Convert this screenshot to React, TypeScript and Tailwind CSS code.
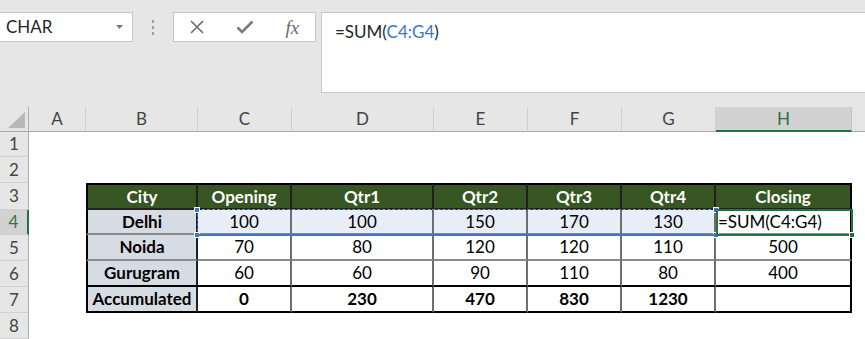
import React from "react"

const colHeads = [
  { label: "A", w: "w-[57px]" },
  { label: "B", w: "w-[112px]" },
  { label: "C", w: "w-[94px]" },
  { label: "D", w: "w-[142px]" },
  { label: "E", w: "w-[94px]" },
  { label: "F", w: "w-[94px]" },
  { label: "G", w: "w-[94px]" },
  { label: "H", w: "w-[136px]" },
]

// table columns B..H
const tableW = ["w-[112px]", "w-[94px]", "w-[142px]", "w-[94px]", "w-[94px]", "w-[94px]", "w-[136px]"]

const rowH = ["h-[25px]", "h-[26px]", "h-[27px]", "h-[25px]", "h-[26px]", "h-[26px]", "h-[26px]", "h-[26px]"]

const data: Record<number, string[]> = {
  3: ["City", "Opening", "Qtr1", "Qtr2", "Qtr3", "Qtr4", "Closing"],
  4: ["Delhi", "100", "100", "150", "170", "130", "=SUM(C4:G4)"],
  5: ["Noida", "70", "80", "120", "120", "110", "500"],
  6: ["Gurugram", "60", "60", "90", "110", "80", "400"],
  7: ["Accumulated", "0", "230", "470", "830", "1230", ""],
}

function cellCls(r: number, c: number) {
  const cls = ["shrink-0 flex items-center border-r-2 border-b-2", tableW[c]]
  if (r === 4 && c === 6) cls.push("justify-start pl-[2px]")
  else cls.push("justify-center")
  if (r === 3) cls.push("border-t-2 border-t-black")
  if (c === 0) cls.push("border-l-2 border-l-black")

  if (c === 6) cls.push("border-r-black")
  else if (c === 0 || r === 3) cls.push("border-r-[#222]")
  else cls.push("border-r-[#6e6e6e]")

  if (r === 6 || r === 7) cls.push("border-b-black")
  else if (r === 3) cls.push("border-b-[#222]")
  else cls.push("border-b-[#8a8a8a]")

  if (r === 3) cls.push("bg-[#375623] text-white font-bold")
  else if (c === 0) cls.push("bg-[#d6dce4] font-bold text-black")
  else if (r === 4 && c < 6) cls.push("bg-[#e8eef8] text-black")
  else cls.push("bg-white text-black")
  if (r === 7) cls.push("font-bold")
  return cls.join(" ")
}

function Handle({ className }: { className: string }) {
  return <div className={"absolute w-[6px] h-[6px] bg-[#4472c4] border border-white " + className} />
}

export default function App() {
  return (
    <div className="w-[865px] h-[339px] overflow-hidden bg-white font-[Lato,sans-serif] text-[17px]">
      {/* Name box + formula bar */}
      <div className="h-[107px] bg-[#e6e6e6] flex items-start pt-[12px]">
        <div className="w-[133px] h-[30px] shrink-0 bg-white border border-[#c6c6c6] border-l-0 flex items-center justify-between pl-[6px] pr-[9px]">
          <span className="text-[17px] text-[#262626]">CHAR</span>
          <svg width="7" height="4" viewBox="0 0 7 4">
            <path d="M0 0h7L3.5 4z" fill="#7a7a7a" />
          </svg>
        </div>
        <div className="w-[40px] h-[30px] shrink-0 flex flex-col items-center justify-center gap-[3px]">
          <span className="w-[2px] h-[3px] bg-[#a0a0a0]" />
          <span className="w-[2px] h-[3px] bg-[#a0a0a0]" />
          <span className="w-[2px] h-[3px] bg-[#a0a0a0]" />
        </div>
        <div className="w-[143px] h-[30px] shrink-0 bg-white border border-[#c6c6c6] flex items-center justify-around">
          <svg width="14" height="14" viewBox="0 0 14 14">
            <path d="M1 1l12 12M13 1L1 13" stroke="#6a6a6a" strokeWidth="1.6" fill="none" />
          </svg>
          <svg width="18" height="14" viewBox="0 0 18 14">
            <path d="M1.5 7.5l4.5 4.5L16.5 1.5" stroke="#7a7a7a" strokeWidth="2.6" fill="none" />
          </svg>
          <span className="font-['Liberation_Serif',serif] italic text-[19px] text-[#6a6a6a] leading-none">fx</span>
        </div>
        <div className="ml-[5px] flex-1 h-[81px] bg-white border border-[#c6c6c6] border-r-0 pl-[13px] pt-[6px] text-[17px] text-[#262626]">
          =SUM(<span className="text-[#3a78c4]">C4:G4</span>)
        </div>
      </div>

      {/* Sheet */}
      <div className="relative">
        <div className="flex h-[25px]">
          <div className="w-[29px] shrink-0 bg-[#e6e6e6] border-r border-r-[#ababab] border-b border-b-[#ababab] flex items-end justify-end pr-[3px] pb-[3px]">
            <svg width="17" height="16" viewBox="0 0 17 16">
              <path d="M17 0V16H0z" fill="#b8b8b8" />
            </svg>
          </div>
          {colHeads.map((h) =>
            h.label === "H" ? (
              <div
                key={h.label}
                className={h.w + " shrink-0 flex items-center justify-center bg-[#d2d2d2] border-r border-r-[#c4c4c4] border-b-2 border-b-[#217346] text-[#217346]"}
              >
                {h.label}
              </div>
            ) : (
              <div
                key={h.label}
                className={h.w + " shrink-0 flex items-center justify-center bg-[#e6e6e6] border-r border-r-[#cfcfcf] border-b border-b-[#ababab] text-[#444]"}
              >
                {h.label}
              </div>
            )
          )}
          <div className="flex-1 bg-[#e6e6e6] border-b border-b-[#ababab]" />
        </div>

        {rowH.map((hc, i) => {
          const r = i + 1
          const cells = data[r]
          return (
            <div key={r} className={"flex " + hc}>
              {r === 4 ? (
                <div className="w-[29px] shrink-0 flex items-center justify-center bg-[#d2d2d2] border-r-2 border-r-[#217346] border-b border-b-[#d0d0d0] text-[#3f6f55]">
                  {r}
                </div>
              ) : (
                <div className="w-[29px] shrink-0 flex items-center justify-center bg-[#e6e6e6] border-r border-r-[#ababab] border-b border-b-[#d0d0d0] text-[#444]">
                  {r}
                </div>
              )}
              <div className="w-[57px] shrink-0" />
              {cells &&
                cells.map((v, c) => (
                  <div key={c} className={cellCls(r, c)}>
                    {v}
                  </div>
                ))}
            </div>
          )
        })}

        {/* Formula range highlight C4:G4 */}
        <div className="absolute left-[197px] top-[102px] w-[519px] h-[27px] border-l border-l-[#4472c4] border-t border-t-[#6f93d3] border-dashed border-b-2 border-b-[#4472c4]">
          <Handle className="-left-[4px] -top-[3px]" />
          <Handle className="-left-[4px] -bottom-[4px]" />
          <Handle className="-right-[3px] -top-[3px]" />
          <Handle className="-right-[3px] -bottom-[4px]" />
        </div>
        <div className="absolute left-[197px] top-[127px] w-[519px] h-[2px] bg-[#4472c4]" />

        {/* Active cell H4 */}
        <div className="absolute left-[716px] top-[102px] w-[137px] h-[27px] border-2 border-[#217346]">
          <div className="absolute -right-[4px] -bottom-[4px] w-[6px] h-[6px] bg-[#217346] border border-white" />
        </div>
      </div>
    </div>
  )
}
